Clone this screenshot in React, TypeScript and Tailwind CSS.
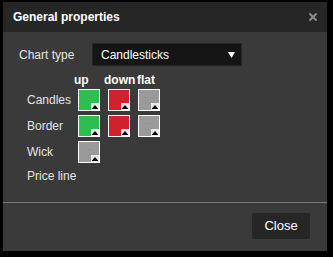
import { X } from "lucide-react";

const rows = [
  { label: "Candles", colors: ["#2fbd50", "#d0212f", "#9a9a9a"] },
  { label: "Border", colors: ["#2fbd50", "#d0212f", "#9a9a9a"] },
  { label: "Wick", colors: ["#9a9a9a"] },
  { label: "Price line", colors: [] as string[] },
];

function Swatch({ color }: { color: string }) {
  const gray = color === "#9a9a9a";
  return (
    <div className="relative w-[22px] h-[22px] border border-white" style={{ backgroundColor: color }}>
      {gray && (
        <svg className="absolute left-0 top-0" width="20" height="20" viewBox="0 0 20 20">
          <rect x="6" y="7" width="1" height="1" fill="#8a8a8a" />
          <rect x="9" y="7" width="1" height="1" fill="#8a8a8a" />
          <rect x="12" y="7" width="1" height="1" fill="#8a8a8a" />
          <rect x="6" y="13" width="1" height="1" fill="#8a8a8a" />
          <rect x="9" y="13" width="1" height="1" fill="#8a8a8a" />
        </svg>
      )}
      <svg className="absolute right-0 bottom-0" width="8" height="7" viewBox="0 0 8 7">
        <rect width="8" height="7" fill="#e8e8e8" />
        <polygon points="1.5,5 4,2 6.5,5" fill="#000" />
        <rect x="1" y="5" width="6" height="1" fill="#000" />
      </svg>
    </div>
  );
}

export default function App() {
  return (
    <div className="w-[333px] h-[257px] bg-black pt-[2px] pl-[3px] font-['Liberation_Sans',Arial,sans-serif]">
      <div className="w-[324px] h-[249px] bg-[#3a3a3a] flex flex-col">
        <div className="h-[30px] shrink-0 bg-[#262626] flex items-center justify-between pl-[10px] pr-[8px]">
          <span className="text-white text-[12px] font-bold">General properties</span>
          <X size={12} strokeWidth={4} className="text-[#8a8a8a]" />
        </div>

        <div className="flex-1 pt-[11px]">
          <div className="flex items-center pl-[16px]">
            <span className="w-[73px] text-[12px] text-[#e4e4e4]">Chart type</span>
            <div className="w-[150px] h-[23px] bg-[#151515] border border-[#252525] flex items-center justify-between pl-[8px] pr-[6px]">
              <span className="text-white text-[12px]">Candlesticks</span>
              <svg width="7" height="6" viewBox="0 0 7 6">
                <polygon points="0,0 7,0 3.5,6" fill="#fff" />
              </svg>
            </div>
          </div>

          <div className="flex h-[14px] mt-[7px] pl-[71px] text-[12px] font-bold text-white leading-[14px]">
            <span className="w-[30px]">up</span>
            <span className="w-[33px]">down</span>
            <span>flat</span>
          </div>

          <div className="flex flex-col gap-[4px] mt-[2px] pl-[24px]">
            {rows.map((row) => (
              <div key={row.label} className={`flex items-center ${row.colors.length ? "h-[22px]" : "h-[18px]"}`}>
                <span className="w-[51px] text-[12px] text-[#e4e4e4]">{row.label}</span>
                <div className="flex gap-[8px]">
                  {row.colors.map((c, i) => (
                    <Swatch key={i} color={c} />
                  ))}
                </div>
              </div>
            ))}
          </div>
        </div>

        <div className="h-[49px] shrink-0 border-t border-[#7a7a7a] flex justify-end items-start pt-[10px] pr-[17px]">
          <button className="w-[58px] h-[26px] bg-[#262626] rounded-[2px] text-white text-[13px]">Close</button>
        </div>
      </div>
    </div>
  );
}
